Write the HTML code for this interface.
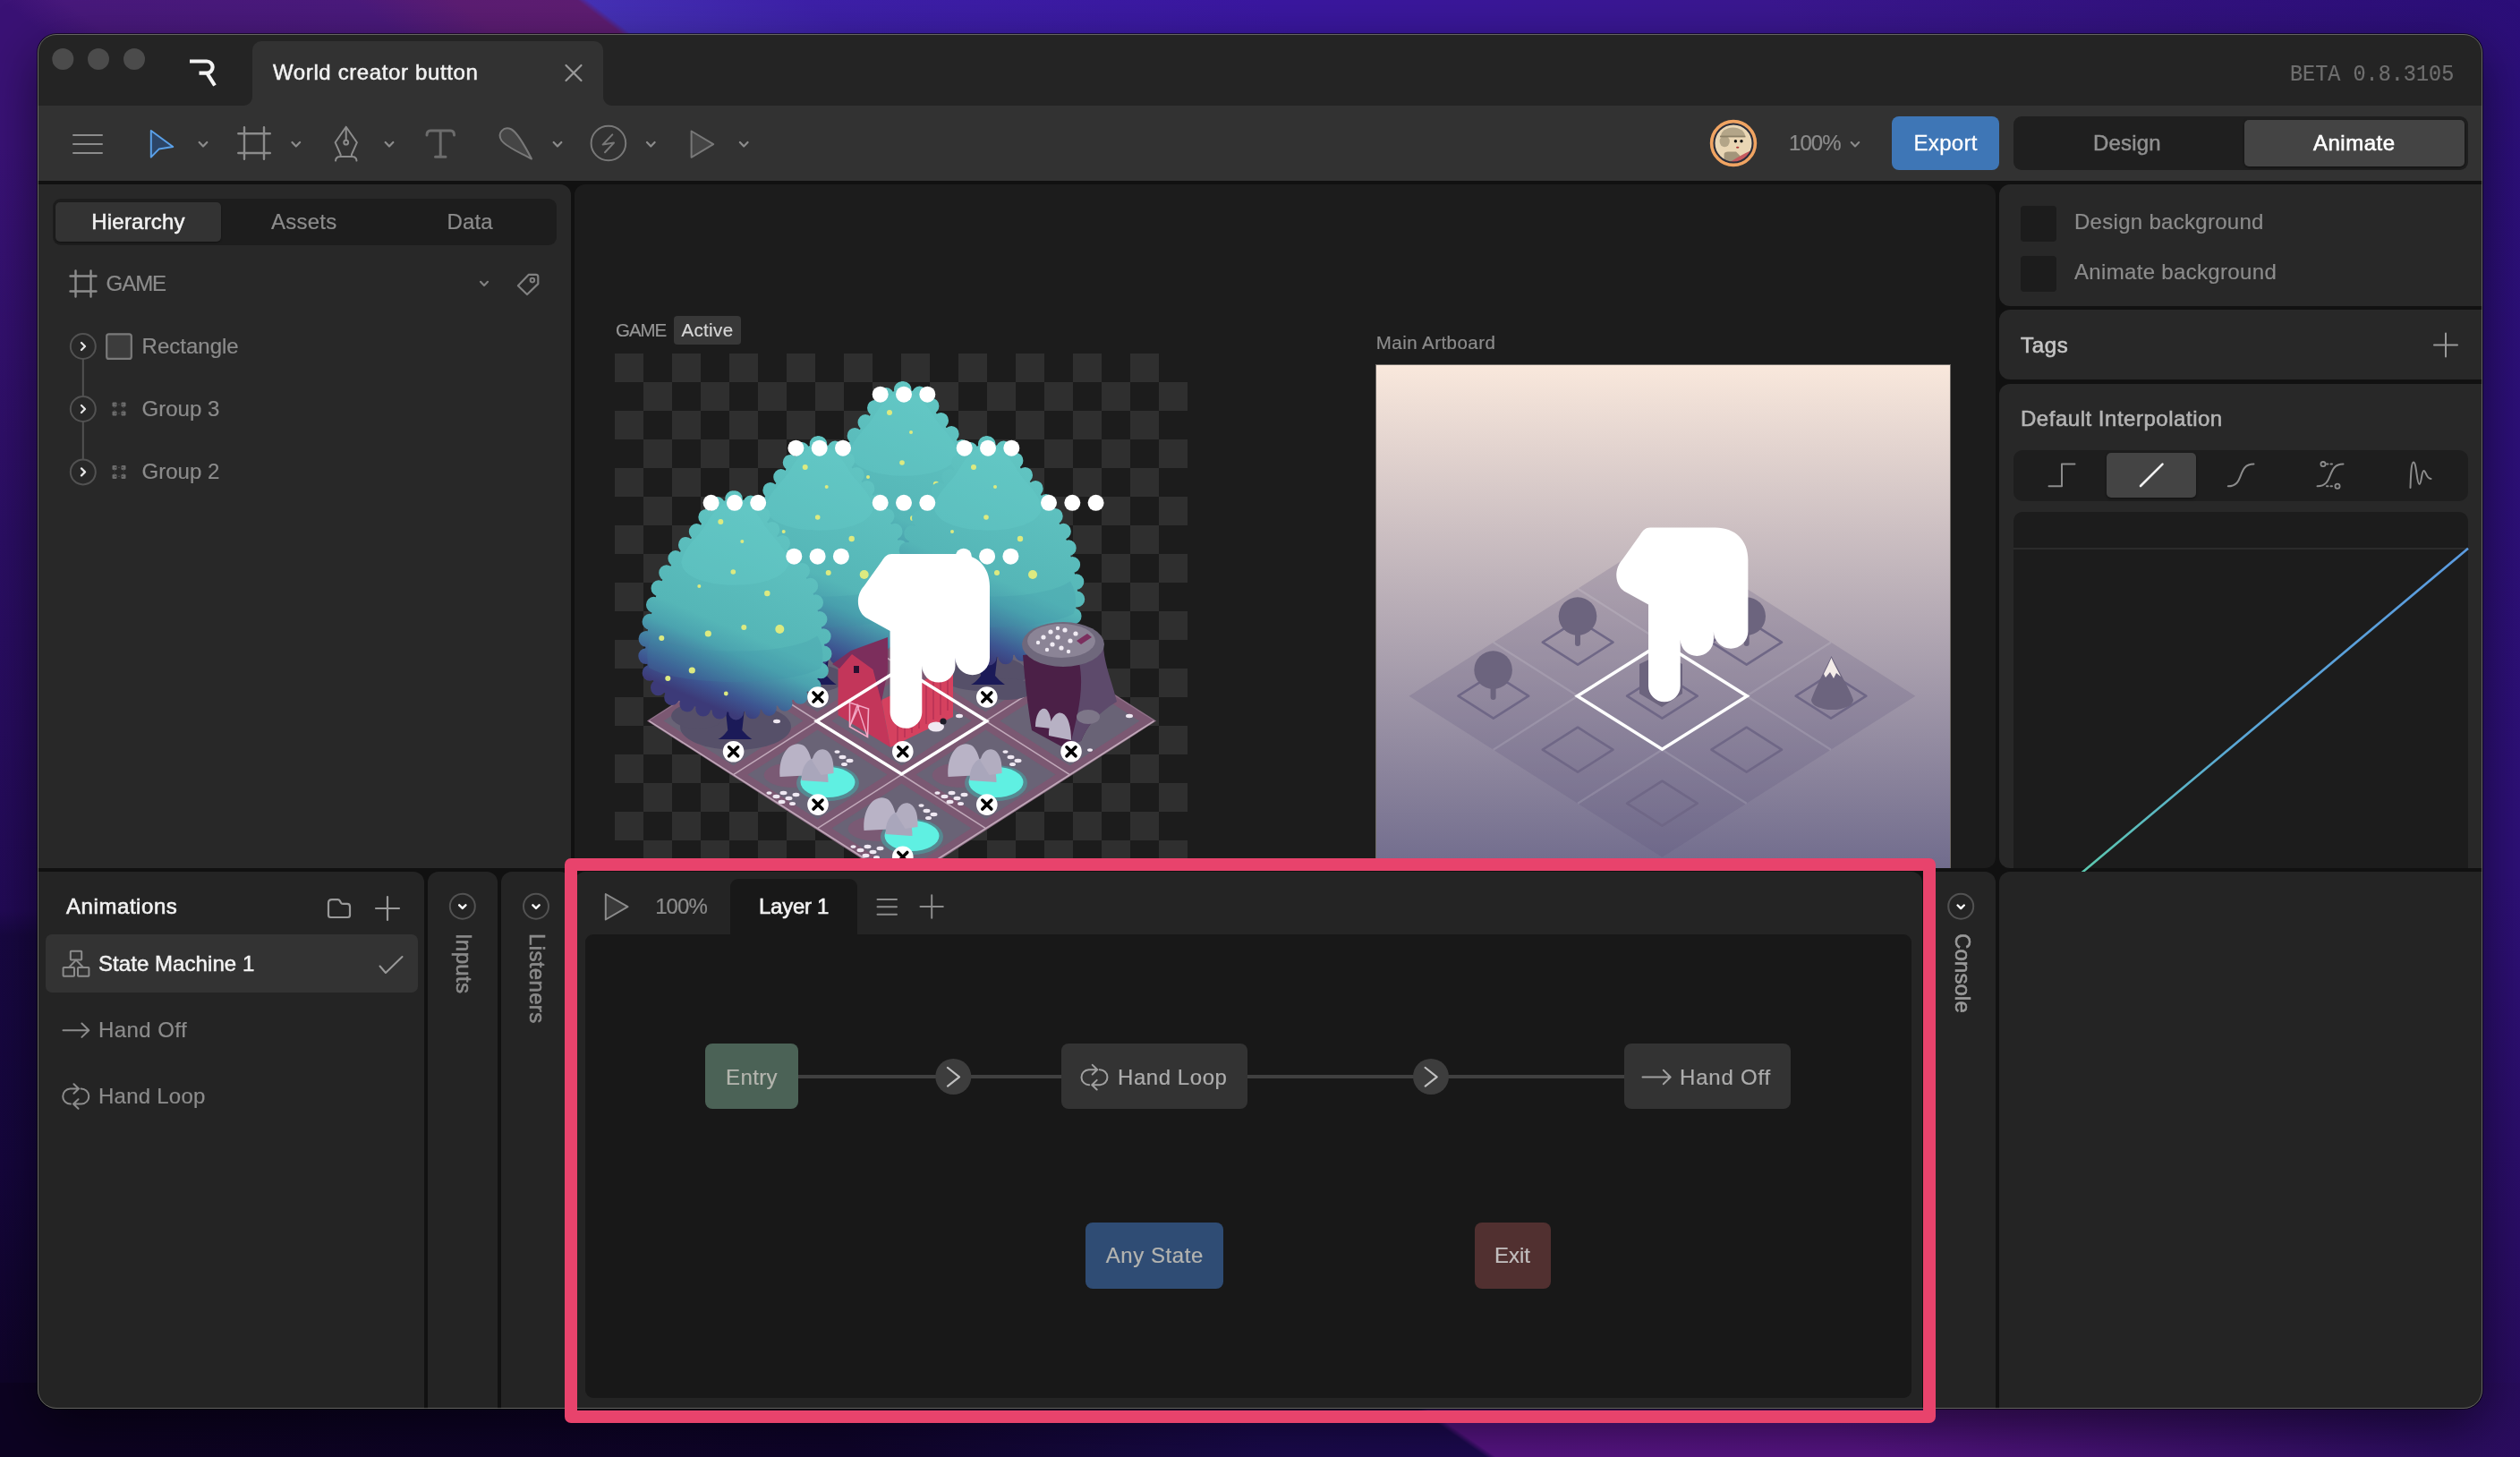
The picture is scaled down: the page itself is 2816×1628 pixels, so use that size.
<!DOCTYPE html>
<html lang="en">
<head>
<meta charset="utf-8">
<title>World creator button</title>
<style>
*{box-sizing:border-box;margin:0;padding:0}
html,body{width:2816px;height:1628px;overflow:hidden}
body{position:relative;font-family:"Liberation Sans",sans-serif;font-size:24px;color:#8c8c8c;background:#2a1070;}
.abs{position:absolute}
#wall{position:absolute;left:0;top:0;width:2816px;height:1628px}
#win{position:absolute;left:42px;top:38px;width:2732px;height:1536px;border-radius:21px;background:#111;overflow:hidden;box-shadow:0 0 0 1px rgba(0,0,0,.6),0 20px 60px rgba(0,0,0,.55)}
#in{position:absolute;left:-42px;top:-38px;width:2816px;height:1628px;will-change:transform}
#winborder{position:absolute;left:42px;top:38px;width:2732px;height:1536px;border-radius:21px;border:1.6px solid rgba(146,146,142,.58);pointer-events:none}
.p{position:absolute;background:#282828}
.q{background:#242424}
.t{position:absolute;white-space:nowrap;line-height:30px;height:30px;font-size:24px;-webkit-text-stroke:.2px currentColor}
.w{color:#f2f2f2}
.b{-webkit-text-stroke:.6px currentColor}
.m{-webkit-text-stroke:.5px currentColor}
svg{position:absolute;overflow:visible}
.ic{fill:none;stroke:#8c8c8c;stroke-width:2;stroke-linecap:round;stroke-linejoin:round}
</style>
</head>
<body>
<svg id="wall" viewBox="0 0 2816 1628" preserveAspectRatio="none">
<defs>
<linearGradient id="gL" x1="0" y1="0" x2="0" y2="1"><stop offset="0" stop-color="#3a1275"/><stop offset=".1" stop-color="#3a1277"/><stop offset=".37" stop-color="#2b0e64"/><stop offset=".5" stop-color="#270c5e"/><stop offset=".625" stop-color="#220a56"/><stop offset=".642" stop-color="#180842"/><stop offset=".8" stop-color="#15063c"/><stop offset=".948" stop-color="#0f0429"/><stop offset="1" stop-color="#0d0322"/></linearGradient>
<linearGradient id="gR" x1="0" y1="0" x2="0" y2="1"><stop offset="0" stop-color="#2c0f7a"/><stop offset=".6" stop-color="#2e1078"/><stop offset=".85" stop-color="#2a0d66"/><stop offset="1" stop-color="#280c5c"/></linearGradient>
<linearGradient id="gT" gradientUnits="userSpaceOnUse" x1="0" y1="0" x2="2816" y2="0"><stop offset="0" stop-color="#3a1275"/><stop offset=".025" stop-color="#48197c"/><stop offset=".14" stop-color="#4a1a7c"/><stop offset=".18" stop-color="#5c1d73"/><stop offset=".229" stop-color="#5e1d72"/><stop offset=".233" stop-color="#4531b6"/><stop offset=".32" stop-color="#3d20a8"/><stop offset=".5" stop-color="#3a17a0"/><stop offset=".7" stop-color="#3a178f"/><stop offset=".85" stop-color="#32127f"/><stop offset="1" stop-color="#2b0e78"/></linearGradient>
<linearGradient id="gB" gradientUnits="userSpaceOnUse" x1="0" y1="0" x2="2816" y2="0"><stop offset="0" stop-color="#0d0322"/><stop offset=".3" stop-color="#0f042b"/><stop offset=".47" stop-color="#1a0a4c"/><stop offset=".547" stop-color="#1c0a50"/><stop offset=".551" stop-color="#561483"/><stop offset=".7" stop-color="#551482"/><stop offset=".82" stop-color="#40116f"/><stop offset=".93" stop-color="#2c0d60"/><stop offset="1" stop-color="#280c5c"/></linearGradient>
</defs>
<rect x="0" y="0" width="2816" height="1628" fill="#2a1070"/>
<rect x="0" y="0" width="80" height="1628" fill="url(#gL)"/>
<rect x="2740" y="0" width="76" height="1628" fill="url(#gR)"/>
<g transform="skewX(52.8)"><rect x="-200" y="0" width="3200" height="70" fill="url(#gT)"/></g>
<g transform="translate(0 1545) skewX(55.4)"><rect x="-300" y="0" width="3300" height="83" fill="url(#gB)"/></g>

</svg>
<div id="win"><div id="in">
<div class="abs" style="left:42px;top:38px;width:2732px;height:164px;background:#323232"></div>
<div class="abs" style="left:42px;top:38px;width:2732px;height:80px;background:#242424"></div>
<div class="abs" style="left:282px;top:46px;width:392px;height:72px;background:#323232;border-radius:10px 10px 0 0"></div>
<div class="abs" style="left:272px;top:108px;width:10px;height:10px;background:radial-gradient(circle at 0 0,#242424 9.5px,#323232 10.5px)"></div>
<div class="abs" style="left:674px;top:108px;width:10px;height:10px;background:radial-gradient(circle at 100% 0,#242424 9.5px,#323232 10.5px)"></div>
<svg style="left:0;top:0" width="2816" height="210" viewBox="0 0 2816 210">
<circle cx="70.3" cy="66" r="12" fill="#4b4b4b"/><circle cx="110" cy="66" r="12" fill="#4b4b4b"/><circle cx="150" cy="66" r="12" fill="#4b4b4b"/>
<path d="M212,68.5 H231 a6.6,6.6 0 0 1 0,13.2 H222.5 M231.5,82 L240,95.5" fill="none" stroke="#f4f4f4" stroke-width="4.2" stroke-linejoin="round"/>
<path d="M632.5,73 L649.5,90 M649.5,73 L632.5,90" stroke="#9a9a9a" stroke-width="2.2" stroke-linecap="round"/>
</svg>
<div class="t w m" style="left:305px;top:66px;letter-spacing:.62px">World creator button</div>
<div class="t" style="left:2558.6px;top:69px;font-family:'Liberation Mono',monospace;font-size:25.4px;color:#6e6e6e;transform:scaleX(.925);transform-origin:0 50%">BETA 0.8.3105</div>

<svg style="left:0;top:0" width="2816" height="210" viewBox="0 0 2816 210">
<g class="ic">
<path d="M82,151 H114 M82,161 H114 M82,171 H114"/>
<path d="M168.800,146 L193.300,164 L177.600,166.600 L168.800,175.600 Z" fill="#2c4566" stroke="#5aa0e8"/>
<path d="M222.7,159 L227.0,163.500 L231.3,159 M326.5,159 L330.8,163.500 L335.1,159 M430.7,159 L435.0,163.500 L439.3,159 M618.7,159 L623.0,163.500 L627.3,159 M723.0,159 L727.3,163.500 L731.6,159 M826.9,159 L831.2,163.500 L835.5,159" stroke-width="2.200"/>
<path d="M273,142.300 V177.800 M295,142.300 V177.800 M266.300,149.200 H301.800 M266.300,171 H301.800" stroke-width="2.400"/>
<path d="M386.700,141.800 L374.600,159.200 L380.600,172.600 V175 M386.700,141.800 L398.900,159.200 L392.900,172.600 V175 M386.700,143 V156.500 M375,179.600 Q375.400,175 380,175 H393.500 Q398.100,175 398.500,179.600"/>
<circle cx="386.700" cy="159.200" r="2.400"/>
<g stroke="#787878">
<path stroke="#6c6c6c" d="M477,151 Q477,146 481,146 H503.500 Q507.500,146 507.500,151 M492.200,146 V175 M486.500,175.300 H498" stroke-width="3"/>
<path d="M560.500,157 C555,148.500 563,140.500 571.500,144.500 C577,147.500 586,162 594,177.500 C580,170 566,164.500 560.500,157 Z" fill="#454545"/>
<circle cx="679.900" cy="160" r="19.300"/>
<path d="M684.300,150.400 L673.600,161.600 L686,159.600 L676,170.200"/>
<path d="M772.600,146.500 L797.200,161.200 L772.600,175.800 Z" fill="#454545"/>
</g>
</g>
<circle cx="1937" cy="160" r="22" fill="#e9d6b4"/>
<path d="M1923,152.400 A13.500,10 0 0 1 1950,152.400 Z" fill="#b3a588"/>
<ellipse cx="1927.200" cy="158" rx="5.600" ry="6.200" fill="#b3a588"/>
<rect x="1922" y="151.600" width="28.500" height="1.800" fill="#8c8066"/>
<path d="M1926.600,182 V172 Q1927,169.400 1931,169.400 H1940 L1944.400,174 V182 Z" fill="#a3957a"/>
<path d="M1933.500,180.900 Q1947,172.500 1956.500,168.300 A21.200,21.200 0 0 1 1933.500,180.900 Z" fill="#c55a5e"/>
<circle cx="1939.400" cy="157.800" r="1.700" fill="#111"/><circle cx="1946" cy="157.800" r="1.700" fill="#111"/>
<ellipse cx="1941.700" cy="164.700" rx="1.700" ry="1" fill="#b03a3a"/>
<circle cx="1937" cy="160" r="21.800" fill="none" stroke="#2b2d3a" stroke-width="2.600"/>
<circle cx="1937" cy="160" r="24.400" fill="none" stroke="#f0a462" stroke-width="3.600"/>
<path d="M2068.700,159 L2073,163.500 L2077.300,159" class="ic" stroke-width="2.200"/>
</svg>
<div class="t" style="left:1999px;top:145px;letter-spacing:-.95px">100%</div>
<div class="abs" style="left:2114px;top:130px;width:120px;height:60px;border-radius:8px;background:#3e76b6"></div>
<div class="t w" style="left:2138.5px;top:145px;letter-spacing:.32px;-webkit-text-stroke:.3px #fff;color:#fff">Export</div>
<div class="abs" style="left:2250px;top:130px;width:508px;height:60px;border-radius:9px;background:#1f1f1f"></div>
<div class="abs" style="left:2508px;top:134px;width:246px;height:52px;border-radius:5px;background:#444;box-shadow:0 1px 3px rgba(0,0,0,.5)"></div>
<div class="t m" style="left:2339px;top:145px;letter-spacing:.2px;color:#919191">Design</div>
<div class="t b" style="left:2585px;top:145px;letter-spacing:.49px;color:#fff">Animate</div>

<div class="p" style="left:42px;top:206px;width:596px;height:763.8px;border-radius:0 12px 0 0"></div>
<div class="abs" style="left:58.5px;top:222px;width:563.5px;height:51.5px;border-radius:9px;background:#1d1d1d"></div>
<div class="abs" style="left:61.7px;top:226px;width:185.5px;height:44px;border-radius:5px;background:#333;box-shadow:0 1px 2px rgba(0,0,0,.4)"></div>
<div class="t w m" style="left:102.3px;top:233px;letter-spacing:.2px">Hierarchy</div>
<div class="t" style="left:303px;top:233px;letter-spacing:.24px">Assets</div>
<div class="t" style="left:499.6px;top:233px;letter-spacing:.07px">Data</div>
<div class="t" style="left:118.6px;top:302px;letter-spacing:-1.05px">GAME</div>
<div class="t" style="left:158.6px;top:372px">Rectangle</div>
<div class="t" style="left:158.6px;top:442px">Group 3</div>
<div class="t" style="left:158.6px;top:512.4px">Group 2</div>
<svg style="left:0;top:200px" width="660" height="400" viewBox="0 200 660 400">
<g class="ic">
<path d="M84.5,302.5 V331.5 M101.5,302.5 V331.5 M78.5,308.5 H107.5 M78.5,325.5 H107.5" stroke-width="2.4"/>
<path d="M537,314.800 L541,319 L545,314.800" stroke-width="2.200" stroke="#808080"/>
<path d="M578.900,319.300 L590.700,306.900 H598.800 Q601.300,306.900 601.300,309.400 V317.100 L589,329 Z" stroke="#808080" stroke-width="2.200"/>
<circle cx="594.900" cy="313.100" r="2.300" stroke="#808080"/>
<g stroke="#525252" stroke-width="2">
<circle cx="92.8" cy="387" r="14"/><circle cx="92.8" cy="457" r="14"/><circle cx="92.8" cy="527.4" r="14"/>
<path d="M92.8,401.5 V442.5 M92.8,471.5 V513"/>
</g>
<g stroke="#e6e6e6" stroke-width="2.2"><path d="M91,383 L95,387 L91,391 M91,453 L95,457 L91,461 M91,523.4 L95,527.4 L91,531.4"/></g>
<rect x="119.2" y="373.3" width="27.6" height="27.6" rx="2.5" fill="#3c3c3c" stroke="#7a7a7a" stroke-width="2.2"/>
</g>
<g fill="#6c6c6c">
<rect x="125.5" y="449.5" width="5" height="5" rx="1"/><rect x="135.5" y="449.5" width="5" height="5" rx="1"/><rect x="125.5" y="459.5" width="5" height="5" rx="1"/><rect x="135.5" y="459.5" width="5" height="5" rx="1"/>
<rect x="125.5" y="519.9" width="5" height="5" rx="1"/><rect x="135.5" y="519.9" width="5" height="5" rx="1"/><rect x="125.5" y="529.9" width="5" height="5" rx="1"/><rect x="135.5" y="529.9" width="5" height="5" rx="1"/>
</g>
<g fill="none" stroke="#484848" stroke-width="1.2" stroke-dasharray="2 2"><rect x="128" y="452" width="10" height="10"/><rect x="128" y="522.4" width="10" height="10"/></g>
</svg>

<div class="abs" style="left:642px;top:206px;width:1588px;height:763.5px;border-radius:12px;background:#1c1c1c;overflow:hidden">
<div class="abs" style="left:45px;top:189px;width:640px;height:640px;background:repeating-conic-gradient(#1c1c1c 0 25%,#2f2f2f 0 50%) 0 0/64px 64px"></div>
<div class="abs" style="left:895px;top:201px;width:642.5px;height:642px;border:1.7px solid #6e6a66;background:linear-gradient(#f9e8dc,#5e5b82)"></div>
<div class="abs" style="left:111.1px;top:147px;width:75px;height:32px;border-radius:4px;background:#383838"></div>
<div class="t" style="left:46px;top:148px;font-size:20.5px;letter-spacing:-1.07px;color:#959595">GAME</div>
<div class="t" style="left:119.4px;top:148px;font-size:20.5px;letter-spacing:.37px;color:#d6d6d6">Active</div>
<div class="t" style="left:895.8px;top:162.2px;font-size:20.5px;letter-spacing:.45px">Main Artboard</div>
<svg style="left:0;top:0" width="1588" height="763.5" viewBox="642 206 1588 763.5">
<defs>
<linearGradient id="gTree" x1=".68" y1="0" x2=".32" y2="1"><stop offset="0" stop-color="#62c6c3"/><stop offset=".6" stop-color="#55b6b7"/><stop offset=".7" stop-color="#4ba3af"/><stop offset=".8" stop-color="#42799f"/><stop offset=".88" stop-color="#3d5591"/><stop offset=".96" stop-color="#3c3a78"/></linearGradient>
<clipPath id="cGame"><rect x="687" y="395" width="640" height="640"/></clipPath>
<clipPath id="cMain"><rect x="1538.500" y="408.500" width="639.500" height="640"/></clipPath>
<g id="tree">
<path d="M-11,236 L-8,263 Q-14,271 -19,273 L19,273 Q13,269 8,263 L11,236 Z" fill="#1b1a58"/>
<g transform="scale(1 1.05)">
<path d="M0,4 C14,4 26,12 38,32 C46,44 53,51 60,59 C70,72 77,83 84,96 C89,108 92,121 95,134 C98,146 100,154 100,162 C100,178 96,190 90,200 C80,216 40,231 0,231 C-40,231 -80,216 -90,200 C-96,190 -100,178 -100,162 C-100,154 -98,146 -95,134 C-92,121 -89,108 -84,96 C-77,83 -70,72 -60,59 C-53,51 -46,44 -38,32 C-26,12 -14,4 0,4 Z" fill="url(#gTree)" stroke="url(#gTree)" stroke-width="17" stroke-linecap="round" stroke-dasharray="0 18.500"/>
<path d="M0,6 C12,6 22,14 33,32 C42,46 58,56 60,72 C58,90 24,96 0,96 C-24,96 -58,90 -60,72 C-58,56 -42,46 -33,32 C-22,14 -12,6 0,6 Z" fill="#68cdc9" opacity=".32"/>
<path d="M-92,150 C-60,172 60,172 92,150 C98,160 100,170 96,184 C60,204 -60,204 -96,184 C-100,170 -98,160 -92,150 Z" fill="#3f8fa6" opacity=".18"/>
</g>
<g fill="#dcea80"><circle cx="-16" cy="30" r="3"/><circle cx="8" cy="52" r="2"/><circle cx="-2" cy="86" r="2.800"/><circle cx="-40" cy="102" r="2"/><circle cx="36" cy="110" r="3.200"/><circle cx="-30" cy="155" r="3.600"/><circle cx="50" cy="150" r="5"/><circle cx="10" cy="148" r="3"/><circle cx="-82" cy="160" r="3"/><circle cx="-48" cy="196" r="3.600"/><circle cx="-10" cy="222" r="2.400"/><circle cx="-75" cy="205" r="3"/></g>
</g>
<g id="dots" fill="#fff"><circle cx="-26.300" cy="0" r="9"/><circle cx="0" cy="0" r="9"/><circle cx="26.300" cy="0" r="9"/></g>
<g id="xm"><circle r="11.800" fill="#fff"/><path d="M-5,-5 L5,5 M5,-5 L-5,5" stroke="#000" stroke-width="3.600" stroke-linecap="round"/></g>
<path id="hand" d="M37,0 H110 C132,0 146.600,14 146.600,36 V116 A19.250,19.250 0 0 1 108.100,116 V125 A18.600,18.600 0 0 1 70.900,125 V177 A17.850,17.850 0 0 1 35.200,177 V86 L8,71 C-3,63 -3,46 6,36 L26,8 C29,3 32,0 37,0 Z" fill="#fff"/>
<g id="tile">
<path d="M0,-60 L94,0 L0,60 L-94,0 Z" fill="#7b5872"/>
<path d="M0,-50 L78,0 L0,50 L-78,0 Z" fill="#696376"/>
</g>
<g id="pond">
<ellipse cx="-26" cy="8" rx="34" ry="14" fill="#7a5a74"/>
<ellipse cx="11.500" cy="17" rx="35" ry="20" fill="#3fb8b4" opacity=".45"/>
<ellipse cx="11.500" cy="16" rx="30.500" ry="17" fill="#5ff0e2"/>
<path d="M-42,10 C-44,-16 -30,-30 -18,-26 C-10,-24 -6,-10 -4,8 Z" fill="#b9b3c6"/>
<path d="M-18,14 C-18,-4 -8,-14 2,-10 C10,-6 12,6 12,16 Z" fill="#a9a6bb"/>
<path d="M-6,-8 C-4,-20 6,-24 12,-18 C18,-12 18,-2 18,6 L4,8 Z" fill="#b2adc0"/>
<g fill="#efe8f2"><ellipse cx="-46" cy="32" rx="4" ry="2.200"/><ellipse cx="-38" cy="28" rx="4" ry="2.200"/><ellipse cx="-32" cy="34" rx="4" ry="2.200"/><ellipse cx="-24" cy="30" rx="4" ry="2.200"/><ellipse cx="-40" cy="38" rx="4" ry="2.200"/><ellipse cx="-28" cy="40" rx="3.500" ry="2"/><ellipse cx="-54" cy="28" rx="3" ry="1.800"/><ellipse cx="28" cy="-12" rx="4" ry="2.200"/><ellipse cx="36" cy="-8" rx="4" ry="2.200"/><ellipse cx="30" cy="-4" rx="3.500" ry="2"/><ellipse cx="22" cy="-18" rx="3" ry="1.800"/></g>
</g>
</defs>
<g clip-path="url(#cGame)">
<!-- ground tiles: center (1007.5,805.6) hw 94 hh 60 -->
<path d="M1007.500,623 L1292,805.600 L1007.500,988 L723,805.600 Z" fill="#8f7088"/>
<g>
<use href="#tile" x="1007.500" y="685.600"/>
<use href="#tile" x="913.500" y="745.600"/><use href="#tile" x="1101.500" y="745.600"/>
<use href="#tile" x="819.500" y="805.600"/><use href="#tile" x="1007.500" y="805.600"/><use href="#tile" x="1195.500" y="805.600"/>
<use href="#tile" x="913.500" y="865.600"/><use href="#tile" x="1101.500" y="865.600"/>
<use href="#tile" x="1007.500" y="925.600"/>
</g>
<g stroke="#cdb6c6" stroke-width="1.600" fill="none" opacity=".85">
<path d="M725.500,805.600 L1007.500,985.600 L1289.500,805.600 M819.500,745.600 L1101.500,925.600 M913.500,685.600 L1195.500,865.600 M1195.500,745.600 L913.500,925.600 M1101.500,685.600 L819.500,865.600"/>
</g>
<!-- bush shadows under trees -->
<g fill="#565069">
<ellipse cx="822" cy="812" rx="62" ry="26"/><ellipse cx="780" cy="800" rx="30" ry="14"/><ellipse cx="905" cy="758" rx="40" ry="16"/><ellipse cx="1098" cy="752" rx="50" ry="20"/><ellipse cx="1125" cy="770" rx="30" ry="12"/>
</g>
<!-- trees back to front -->
<use href="#tree" x="1010" y="431"/>
<use href="#tree" x="915.700" y="492"/>
<use href="#tree" x="1104" y="492"/>
<!-- stump -->
<g>
<path d="M1143,732 C1146,770 1150,800 1153,816 L1186,834 L1208,828 C1215,810 1228,796 1246,782 C1240,760 1232,742 1231,722 Z" fill="#4b2047"/>
<path d="M1208,828 C1215,810 1228,796 1248,784 C1242,760 1234,742 1233,722 L1206,740 C1212,770 1204,800 1196,832 Z" fill="#5d4a6b"/>
<ellipse cx="1188" cy="720" rx="46" ry="25" fill="#6f687c"/>
<ellipse cx="1186" cy="716" rx="38" ry="19" fill="#8b8496"/>
<g fill="#f1ecf4"><circle cx="1166" cy="712" r="2.600"/><circle cx="1174" cy="706" r="2.600"/><circle cx="1182" cy="712" r="2.600"/><circle cx="1190" cy="704" r="2.600"/><circle cx="1176" cy="720" r="2.600"/><circle cx="1186" cy="724" r="2.600"/><circle cx="1196" cy="716" r="2.600"/><circle cx="1202" cy="708" r="2.600"/><circle cx="1170" cy="726" r="2.200"/><circle cx="1194" cy="728" r="2.200"/><circle cx="1160" cy="718" r="2.200"/><circle cx="1182" cy="702" r="2.200"/></g>
<path d="M1203,716 l12,-8 l5,4 l-12,8z" fill="#7b2f5e"/>
<path d="M1157,812 c0,-14 6,-22 11,-20 c5,2 7,12 7,22z M1172,822 c0,-18 8,-28 15,-25 c7,3 10,16 10,30z" fill="#b7b1c4"/>
<ellipse cx="1216" cy="801" rx="13" ry="8" fill="#7d7688"/>
</g>
<!-- barn -->
<g>
<path d="M936.500,746 L952,729 L975.500,747 L985,782 L995,835 L936.500,799 Z" fill="#c3365a"/>
<path d="M995,835 L985,782 L1065,745 L1065,801 Z" fill="#d5415f"/>
<g stroke="#b02e52" stroke-width="1.200"><path d="M1003,778 V829 M1011,774 V824 M1019,770 V819 M1027,766 V814 M1035,762 V809 M1043,758 V804 M1051,754 V799 M1059,750 V794"/></g>
<path d="M930,742 L951,727 L992,712 L992,750 L985,784 L975.500,748 L952,731 L938,747 Z" fill="#7c2e5c"/>
<path d="M949.500,785 L970.500,792 L969.500,823.500 L949.500,812 Z" fill="none" stroke="#f3a9c6" stroke-width="1.600"/>
<path d="M949.500,812 L958,788 L969.500,823.500 M960,789 L949.500,812" fill="none" stroke="#f3a9c6" stroke-width="1.400"/>
<rect x="954" y="744" width="6" height="8" fill="#2a1030"/>
</g>
<!-- front-left tree -->
<use href="#tree" x="821.300" y="553"/>
<!-- ponds and rocks -->
<use href="#pond" x="913.500" y="858"/><use href="#pond" x="1101.500" y="858"/><use href="#pond" x="1007.500" y="918"/>
<g fill="#efe8f2"><ellipse cx="1046" cy="812" rx="9" ry="5.500"/><circle cx="1054" cy="806" r="3.600" fill="#1c1c28"/><ellipse cx="1072" cy="800" rx="4" ry="2.200"/><ellipse cx="1262" cy="800" rx="4" ry="2.200"/><ellipse cx="868" cy="806" rx="4" ry="2.200"/><ellipse cx="1218" cy="838" rx="3" ry="1.800"/></g>
<!-- selected diamond -->
<path d="M1007.500,746.500 L1102.500,805.800 L1007.500,865 L912.500,805.800 Z" fill="none" stroke="#fff" stroke-width="3.600" stroke-linejoin="miter"/>
<!-- hand -->
<use href="#hand" x="959.400" y="619"/>
<!-- dot groups -->
<use href="#dots" x="1010" y="440.700"/><use href="#dots" x="915.700" y="500.700"/><use href="#dots" x="1104" y="500.700"/>
<use href="#dots" x="820.900" y="561.800"/><use href="#dots" x="1010" y="561.800"/><use href="#dots" x="1198.300" y="561.800"/>
<use href="#dots" x="913.600" y="621.700"/><use href="#dots" x="1103.100" y="621.700"/>
<!-- x markers -->
<use href="#xm" x="914" y="779"/><use href="#xm" x="1102.800" y="779"/>
<use href="#xm" x="819.600" y="839.800"/><use href="#xm" x="1008.800" y="839.800"/><use href="#xm" x="1197" y="839.800"/>
<use href="#xm" x="914" y="899.100"/><use href="#xm" x="1102.800" y="899.100"/><use href="#xm" x="1008.800" y="957.400"/>
</g>

<g clip-path="url(#cMain)">
<!-- ground: center (1857.4,777.7) tile hw 94.3 hh 60 -->
<path d="M1857.400,597.700 L2140.300,777.700 L1857.400,957.700 L1574.500,777.700 Z" fill="#5a4f78" opacity=".2"/>
<g stroke="#fff" stroke-opacity=".13" stroke-width="2.400" fill="none">
<path d="M1668.800,717.700 L1951.700,897.700 M1763.100,657.700 L2046,837.700 M2046,717.700 L1763.100,897.700 M1951.700,657.700 L1668.800,837.700"/>
</g>
<g fill="none" stroke="#6f6786" stroke-width="2.600" stroke-linejoin="round">
<path id="sd" d="M0,-25 L39.300,0 L0,25 L-39.300,0 Z" transform="translate(1857.400 777.700)"/>
<path d="M0,-25 L39.300,0 L0,25 L-39.300,0 Z" transform="translate(1763.100 717.700)"/>
<path d="M0,-25 L39.300,0 L0,25 L-39.300,0 Z" transform="translate(1951.700 717.700)"/>
<path d="M0,-25 L39.300,0 L0,25 L-39.300,0 Z" transform="translate(1668.800 777.700)"/>
<path d="M0,-25 L39.300,0 L0,25 L-39.300,0 Z" transform="translate(2046 777.700)"/>
<path d="M0,-25 L39.300,0 L0,25 L-39.300,0 Z" transform="translate(1763.100 837.700)"/>
<path d="M0,-25 L39.300,0 L0,25 L-39.300,0 Z" transform="translate(1951.700 837.700)"/>
<path d="M0,-25 L39.300,0 L0,25 L-39.300,0 Z" transform="translate(1857.400 897.700)"/>
</g>
<g fill="#6c647e">
<circle cx="1763" cy="688.600" r="21.300"/><rect x="1760" y="705" width="6" height="17" rx="3"/>
<circle cx="1951.700" cy="688.600" r="21.300"/><rect x="1948.700" y="705" width="6" height="17" rx="3"/>
<circle cx="1668.600" cy="748.600" r="21.300"/><rect x="1665.600" y="765" width="6" height="17" rx="3"/>
<path d="M2046.500,733 C2052,745 2066,768 2071,782 A23.500,11 0 0 1 2024,782 C2029,768 2041,745 2046.500,733 Z"/>
<path d="M1832,742 L1857,730 L1880,742 V775 L1857,790 L1832,775 Z"/>
</g>
<path d="M2046.500,735 C2049,741 2054,750 2057,756 L2052,752 L2049,758 L2045,751 L2040,757 L2038,753 C2041,747 2044,741 2046.500,735 Z" fill="#f4ece8"/>
<path d="M1857.400,718.200 L1952.200,777.700 L1857.400,837.200 L1762.600,777.700 Z" fill="none" stroke="#fff" stroke-width="3.600"/>
<use href="#hand" x="1806.800" y="589.400"/>
</g>

</svg>
</div>

<div class="p" style="left:2234px;top:206px;width:540px;height:136px;border-radius:12px 0 0 12px"></div>
<div class="p" style="left:2234px;top:346px;width:540px;height:78px;border-radius:12px 0 0 12px"></div>
<div class="p" style="left:2234px;top:428.5px;width:540px;height:541px;border-radius:12px 0 0 12px"></div>
<div class="abs" style="left:2258px;top:230px;width:40px;height:40px;border-radius:4px;background:#1c1c1c"></div>
<div class="abs" style="left:2258px;top:286px;width:40px;height:40px;border-radius:4px;background:#1c1c1c"></div>
<div class="t" style="left:2318px;top:232.5px;letter-spacing:.29px">Design background</div>
<div class="t" style="left:2318px;top:288.5px;letter-spacing:.33px">Animate background</div>
<div class="t b" style="left:2258px;top:370.5px;letter-spacing:.72px;color:#c6c6c6">Tags</div>
<div class="t b" style="left:2258px;top:452.5px;letter-spacing:.52px;color:#b4b4b4">Default Interpolation</div>
<div class="abs" style="left:2250px;top:502.5px;width:508px;height:57px;border-radius:10px;background:#1e1e1e"></div>
<div class="abs" style="left:2354px;top:506px;width:100px;height:50px;border-radius:5px;background:#444;box-shadow:0 1px 3px rgba(0,0,0,.45)"></div>
<div class="abs" style="left:2250px;top:572px;width:508px;height:397.5px;border-radius:10px 10px 0 0;background:#1c1c1c"></div>
<div class="abs" style="left:2250px;top:612px;width:508px;height:1.5px;background:#2b2b2b"></div>
<svg style="left:2234px;top:206px" width="540" height="763.5" viewBox="2234 206 540 763.5">
<defs><linearGradient id="gCurve" gradientUnits="userSpaceOnUse" x1="2758" y1="612" x2="2332" y2="970"><stop offset="0" stop-color="#5b9be0"/><stop offset=".6" stop-color="#5aa6d6"/><stop offset="1" stop-color="#5cc8b0"/></linearGradient></defs>
<path d="M2758,612.8 L2320,980.5" stroke="url(#gCurve)" stroke-width="2.6" fill="none"/>
<g class="ic">
<path d="M2720,385.5 H2746 M2733,372.5 V398.5" stroke="#9a9a9a"/>
<path d="M2289.5,543.3 H2304 V518.6 H2318.5"/>
<path d="M2392,543 L2416.5,518.6" stroke="#f2f2f2" stroke-width="2.6"/>
<path d="M2489.8,543.3 C2509,543.3 2499,518.6 2518.5,518.6"/>
<path d="M2589.5,543.3 C2609,543.3 2599,518.6 2618.5,518.6"/>
<circle cx="2596" cy="518.6" r="2.6" stroke-width="1.8"/><circle cx="2612" cy="543.3" r="2.6" stroke-width="1.8"/>
<path d="M2600,518.6 H2606 M2600,543.3 H2607" stroke-dasharray="1.5 3" stroke-width="2"/>
<path d="M2693.5,545 C2694,530 2694.5,516.5 2697,516.5 C2700.5,516.5 2700.5,541 2703.5,541 C2706,541 2706,526 2708.5,526 C2711,526 2711,535 2716.5,535"/>
</g>
</svg>

<div class="p q" style="left:42px;top:974px;width:432px;height:600px;border-radius:0 12px 0 0"></div>
<div class="p q" style="left:478px;top:974px;width:78px;height:600px;border-radius:12px 12px 0 0"></div>
<div class="p q" style="left:560px;top:974px;width:78px;height:600px;border-radius:12px 12px 0 0"></div>
<div class="p" style="left:642px;top:974px;width:1506px;height:600px;border-radius:12px 12px 0 0;background:#242424"></div>
<div class="p q" style="left:2152px;top:974px;width:78px;height:600px;border-radius:12px 12px 0 0"></div>
<div class="p q" style="left:2234px;top:974px;width:540px;height:600px;border-radius:12px 0 0 0"></div>
<!-- animations -->
<div class="t b w" style="left:74px;top:998px;letter-spacing:.57px">Animations</div>
<div class="abs" style="left:50.5px;top:1044px;width:416px;height:65px;border-radius:7px;background:#333"></div>
<div class="t w m" style="left:110px;top:1062px;letter-spacing:.06px">State Machine 1</div>
<div class="t" style="left:110px;top:1135.5px;letter-spacing:.42px">Hand Off</div>
<div class="t" style="left:110px;top:1210px;letter-spacing:.24px">Hand Loop</div>
<!-- vertical labels -->
<div class="t b" style="left:533.3px;top:1043.3px;letter-spacing:.33px;transform-origin:0 0;transform:rotate(90deg);color:#8a8a8a">Inputs</div>
<div class="t b" style="left:615.3px;top:1043.3px;letter-spacing:.35px;transform-origin:0 0;transform:rotate(90deg);color:#8a8a8a">Listeners</div>
<div class="t b" style="left:2207.5px;top:1043.3px;letter-spacing:.13px;transform-origin:0 0;transform:rotate(90deg);color:#9a9a9a">Console</div>
<!-- state machine -->
<div class="abs" style="left:816px;top:982px;width:142px;height:66px;border-radius:9px 9px 0 0;background:#181818"></div>
<div class="abs" style="left:654px;top:1044px;width:1482px;height:517.5px;border-radius:9px;background:#181818"></div>
<div class="t" style="left:732.2px;top:998px;letter-spacing:-.95px">100%</div>
<div class="t b w" style="left:848px;top:998px;letter-spacing:-.27px">Layer 1</div>
<div class="abs" style="left:892px;top:1201px;width:924px;height:4px;background:#404040"></div>
<div class="abs" style="left:788.2px;top:1166.3px;width:104px;height:73px;border-radius:8px;background:#4b6256"></div>
<div class="abs" style="left:1186.3px;top:1166.3px;width:207.8px;height:73px;border-radius:8px;background:#333"></div>
<div class="abs" style="left:1815.3px;top:1166.3px;width:186px;height:73px;border-radius:8px;background:#333"></div>
<div class="abs" style="left:1213.4px;top:1366px;width:154px;height:74px;border-radius:8px;background:#2f4c74"></div>
<div class="abs" style="left:1647.5px;top:1366px;width:85.8px;height:74px;border-radius:8px;background:#513030"></div>
<div class="t" style="left:811px;top:1188.5px;letter-spacing:.4px;color:#b4b5ae">Entry</div>
<div class="t" style="left:1249px;top:1188.5px;letter-spacing:.56px;color:#adadad">Hand Loop</div>
<div class="t" style="left:1877px;top:1188.5px;letter-spacing:.8px;color:#adadad">Hand Off</div>
<div class="t" style="left:1235.8px;top:1388.3px;letter-spacing:.55px;color:#b4b4b0">Any State</div>
<div class="t" style="left:1670px;top:1388.3px;color:#c2bebe">Exit</div>
<svg style="left:0;top:974px" width="2816" height="599" viewBox="0 974 2816 599">
<g class="ic">
<!-- folder / plus -->
<path d="M367,1022.500 V1009 Q367,1005.200 371,1005.200 H377.500 Q379,1005.200 379.800,1006.600 L381,1008.700 Q381.600,1009.800 383,1009.800 H388 Q391,1009.800 391,1013 V1022.500 Q391,1025 388.500,1025 H369.500 Q367,1025 367,1022.500 Z" stroke="#9a9a9a" stroke-width="2.200"/>
<path d="M420,1015 H446 M433,1002 V1028" stroke="#9a9a9a" stroke-width="2.200"/>
<!-- state machine icon -->
<rect x="78.800" y="1062.800" width="12.400" height="9.800" rx=".8"/><rect x="70.600" y="1081" width="12.400" height="9.800" rx=".8"/><rect x="87" y="1081" width="12.400" height="9.800" rx=".8"/>
<path d="M77,1081 L85,1072.600 L93,1081"/>
<path d="M424.500,1079.500 L431,1087 L449.500,1069" stroke="#9a9a9a"/>
<!-- hand off arrow -->
<path d="M70.500,1151.200 H99 M91.400,1143.500 L99.300,1151.200 L91.400,1158.900"/>
<!-- loop icon -->
<path id="loop" d="M79,1233.500 A8.500,8.500 0 0 1 78.500,1216.500 H87.500 M82.500,1211.200 L88,1216.500 L82.500,1221.800 M90.500,1216.500 A8.500,8.500 0 0 1 91,1233.500 H82.500 M87.500,1228.200 L82,1233.500 L87.500,1238.800"/>
<!-- collapse circles -->
<g stroke="#525252" stroke-width="2"><circle cx="516.800" cy="1012.700" r="14"/><circle cx="599" cy="1012.700" r="14"/><circle cx="2191.200" cy="1012.700" r="14"/></g>
<g stroke="#fff" stroke-width="2.400"><path d="M513.200,1011.300 L516.800,1014.900 L520.400,1011.300 M595.400,1011.300 L599,1014.900 L602.600,1011.300 M2187.600,1011.500 L2191.200,1015.100 L2194.800,1011.500"/></g>
<!-- sm toolbar -->
<path d="M676.800,999 L701.500,1013.200 L676.800,1027.500 Z" fill="#3a3a3a"/>
<path d="M980.500,1005 H1002 M980.500,1013.300 H1002 M980.500,1021.700 H1002"/>
<path d="M1028.500,1013 H1053.800 M1041.200,1000.300 V1025.800"/>
<!-- node icons -->
<use href="#loop" x="1138.200" y="-21.300" stroke="#a0a0a0"/>
<path d="M1835.500,1203.500 H1866.500 M1858.800,1195.800 L1866.700,1203.500 L1858.800,1211.200" stroke="#a0a0a0"/>
</g>
<circle cx="1065.300" cy="1203" r="20" fill="#3d3d3d"/><circle cx="1599" cy="1203" r="20" fill="#3d3d3d"/>
<path d="M1059,1193 L1072,1203.300 L1059,1213.600 M1592.700,1193 L1605.700,1203.300 L1592.700,1213.600" fill="none" stroke="#c0c0c0" stroke-width="2.200" stroke-linecap="round" stroke-linejoin="round"/>
</svg>

</div></div>
<div id="winborder"></div>
<div class="abs" style="left:630.7px;top:958.6px;width:1532.6px;height:631px;border:14.3px solid #e8436c;border-radius:7px"></div>

</body>
</html>
